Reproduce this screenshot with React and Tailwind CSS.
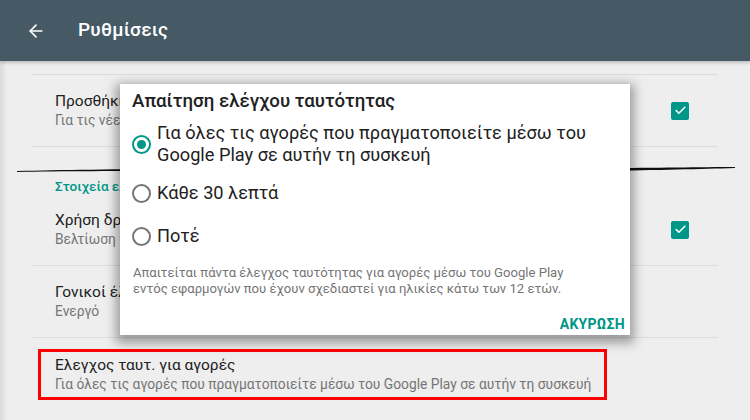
import React from 'react'
import { ArrowLeft, Check } from 'lucide-react'

function Row({ title, sub, checked }) {
  return (
    <div className="flex items-center h-[72px] pl-[24px] pr-[29px] border-b border-[#dcdcdc]">
      <div className="flex-1 min-w-0">
        <div className="text-[15.5px] leading-[19px] text-[#212121] whitespace-nowrap">{title}</div>
        <div className="text-[13.8px] leading-[19px] text-[#757575] whitespace-nowrap">{sub}</div>
      </div>
      {checked && (
        <div className="w-[18px] h-[18px] rounded-[2px] bg-[#009688] flex items-center justify-center">
          <Check className="w-[13px] h-[13px] text-white" strokeWidth={3} />
        </div>
      )}
    </div>
  )
}

function Radio({ selected, children }) {
  return (
    <div className="flex items-center gap-[6px]">
      <div
        className={`w-[19px] h-[19px] shrink-0 rounded-full border-2 flex items-center justify-center ${
          selected ? 'border-[#009688]' : 'border-[#757575]'
        }`}
      >
        {selected && <div className="w-[9px] h-[9px] rounded-full bg-[#009688]" />}
      </div>
      <div className="text-[18.2px] leading-[22px] text-[#212121]">{children}</div>
    </div>
  )
}

export default function App() {
  return (
    <div className="w-[750px] h-[420px] overflow-hidden bg-[#eeeeee] font-['Roboto',sans-serif] relative">
      {/* Toolbar */}
      <header className="h-[61px] bg-[#455a64] flex items-center shadow-[0_2px_3px_rgba(0,0,0,0.2)] relative z-10">
        <ArrowLeft className="ml-[26px] w-[20px] h-[20px] text-white" strokeWidth={2} />
        <h1 className="ml-[32px] text-[19px] font-medium text-white tracking-[0.2px]">Ρυθμίσεις</h1>
      </header>

      {/* Content */}
      <div className="bg-gradient-to-r from-[#dadada] via-[#eeeeee] to-[#eeeeee] bg-[length:14px_100%] bg-no-repeat h-[359px]">
        <div className="ml-[31px] w-[687px] pt-[13px]">
          <div className="border-t border-[#dcdcdc]" />
          <Row title="Προσθήκη εικονιδίου στην αρχική οθόνη" sub="Για τις νέες εφαρμογές" checked />
        </div>

        {/* torn edge */}
        <svg width="750" height="12" viewBox="0 0 750 12" className="block mt-[15px]">
          <path
            d="M17 9 C60 8 120 7 180 7 C260 6 320 6 380 7 C470 7 540 7 600 6 C660 6 700 5 735 5 L735 6 C700 7 660 8 600 9 C540 9 470 9 380 9 C320 9 260 9 180 9 C120 9 60 9 17 10 Z"
            fill="#0d0d0d"
          />
        </svg>

        <div className="ml-[31px] w-[687px]">
          <div className="pl-[24px] text-[13.5px] font-medium text-[#009688] leading-[16px] pt-[4px]">Στοιχεία ελέγχου χρήστη</div>
          <Row title="Χρήση δραστηριότητας εφαρμογών" sub="Βελτίωση της ασφάλειας αγορών" checked />
          <Row title="Γονικοί έλεγχοι" sub="Ενεργό" />
          <div className="ml-[7px] mt-[11px] w-[569px] h-[51px] border-[3px] border-[#ff0000] pl-[14px] flex flex-col justify-center">
            <div className="text-[15.5px] leading-[19px] text-[#212121] whitespace-nowrap">Ελεγχος ταυτ. για αγορές</div>
            <div className="text-[13.8px] leading-[19px] text-[#757575] whitespace-nowrap">
              Για όλες τις αγορές που πραγματοποιείτε μέσω του Google Play σε αυτήν τη συσκευή
            </div>
          </div>
        </div>
      </div>

      {/* Dialog */}
      <div className="absolute left-[120px] top-[84px] w-[510px] h-[251px] bg-white shadow-[0_4px_10px_4px_rgba(0,0,0,0.35)] px-[12px] pt-[4px] flex flex-col">
        <div className="text-[18.7px] font-medium text-[#212121] leading-[26px]">Απαίτηση ελέγχου ταυτότητας</div>
        <div className="mt-[8px] flex flex-col">
          <Radio selected>
            Για όλες τις αγορές που πραγματοποιείτε μέσω του
            <br />
            Google Play σε αυτήν τη συσκευή
          </Radio>
          <div className="mt-[16px]">
            <Radio>Κάθε 30 λεπτά</Radio>
          </div>
          <div className="mt-[21px]">
            <Radio>Ποτέ</Radio>
          </div>
        </div>
        <div className="mt-[18px] pl-[1px] text-[13.1px] leading-[16px] text-[#757575]">
          Απαιτείται πάντα έλεγχος ταυτότητας για αγορές μέσω του Google Play
          <br />
          εντός εφαρμογών που έχουν σχεδιαστεί για ηλικίες κάτω των 12 ετών.
        </div>
        <div className="mt-auto mb-[3px] self-end leading-[16px] text-[14px] font-bold text-[#009688] tracking-[0.3px] -mr-[7px]">
          ΑΚΥΡΩΣΗ
        </div>
      </div>
    </div>
  )
}
